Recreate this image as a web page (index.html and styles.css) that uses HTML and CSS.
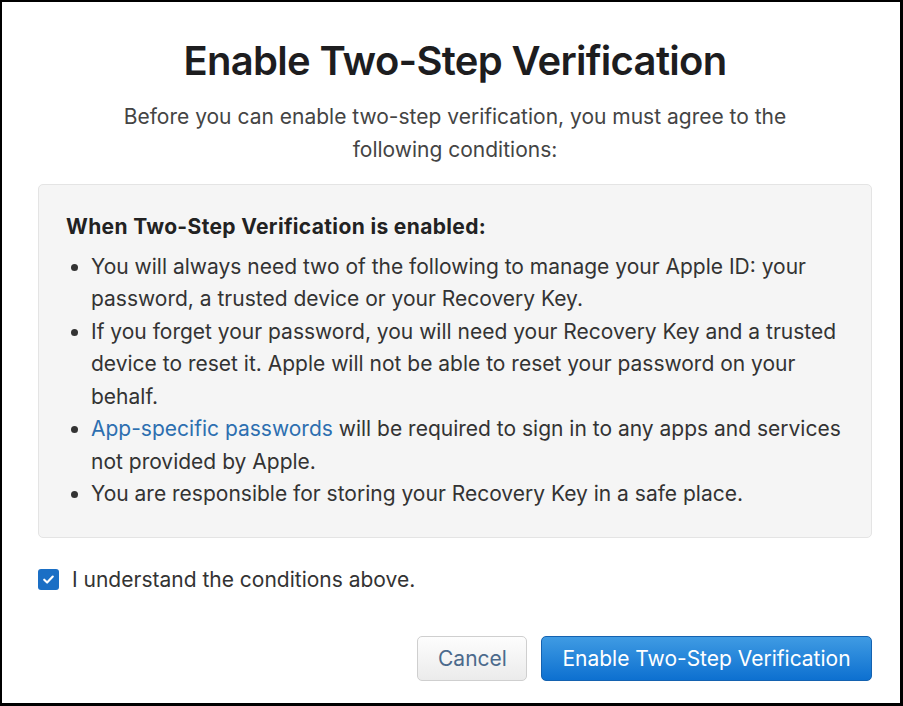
FILE: index.html
```html
<!DOCTYPE html>
<html lang="en">
<head>
    <meta charset="UTF-8">
    <meta name="viewport" content="width=device-width, initial-scale=1.0">
    <title>Enable Two-Step Verification</title>
    <link rel="stylesheet" href="styles.css">
</head>
<body>
    <div class="frame">
        <h1 class="title">Enable Two-Step Verification</h1>
        <p class="intro">Before you can enable two-step verification, you must agree to the<br>following conditions:</p>

        <div class="conditions">
            <p class="conditions-head">When Two-Step Verification is enabled:</p>
            <ul class="conditions-list">
                <li>You will always need two of the following to manage your Apple ID: your password, a trusted device or your Recovery Key.</li>
                <li>If you forget your password, you will need your Recovery Key and a trusted device to reset it. Apple will not be able to reset your password on your behalf.</li>
                <li><a href="#">App-specific passwords</a> will be required to sign in to any apps and services not provided by Apple.</li>
                <li>You are responsible for storing your Recovery Key in a safe place.</li>
            </ul>
        </div>

        <label class="agree">
            <span class="check">
                <svg width="15" height="15" viewBox="0 0 14 14"><path d="M3 7.2l2.7 2.6L11 4.3" fill="none" stroke="#fff" stroke-width="2" stroke-linecap="round" stroke-linejoin="round"/></svg>
            </span>
            I understand the conditions above.
        </label>

        <!-- footer buttons -->
        <div class="actions">
            <button class="btn btn-cancel">Cancel</button>
            <button class="btn btn-primary">Enable Two-Step Verification</button>
        </div>
    </div>
</body>
</html>
```

FILE: styles.css
```css
html, body { margin: 0; height: 100%; }
body { font-family: Inter, "Liberation Sans", sans-serif; color: #333; background: #fff; }

.frame { box-sizing: border-box; height: 706px; border: solid #000; border-width: 2px 3px 3px 2px; padding: 35px 28px 0 36px; display: flex; flex-direction: column; }

.title { margin: 0; font-size: 40px; line-height: 48px; font-weight: 600; color: #1d1d1f; text-align: center; letter-spacing: -0.7px; }
.intro { margin: 15px 0 0; font-size: 21px; line-height: 33px; text-align: center; color: #444; }

.conditions { margin-top: 18px; padding: 26px 21px 26px 27px; background: #f5f5f5; border: 1px solid #e4e4e4; border-radius: 5px; }
.conditions-head { margin: 0 0 7px; font-size: 21px; line-height: 32.5px; font-weight: 700; color: #222; letter-spacing: 0.35px; }
.conditions-list { margin: 0; padding-left: 25px; font-size: 21px; line-height: 32.5px; }
.conditions-list a { color: #2d6fb0; text-decoration: none; }

.agree { margin-top: 26px; display: flex; align-items: center; gap: 13px; font-size: 21px; line-height: 32px; color: #333; }
.check { width: 21px; height: 21px; border-radius: 3px; background: #1b6fc5; display: flex; align-items: center; justify-content: center; }

.actions { margin-top: 40px; display: flex; justify-content: flex-end; gap: 14px; }
.btn { height: 45px; padding: 0 20px; font-family: inherit; font-size: 21px; border-radius: 5px; cursor: pointer; }
.btn-cancel { width: 110px; color: #4b6a8c; background: linear-gradient(#fdfdfd, #ebebeb); border: 1px solid #cfcfcf; }
.btn-primary { width: 331px; color: #fff; background: linear-gradient(#3f9be3, #0d70d0); border: 1px solid #1462b0; }
```
